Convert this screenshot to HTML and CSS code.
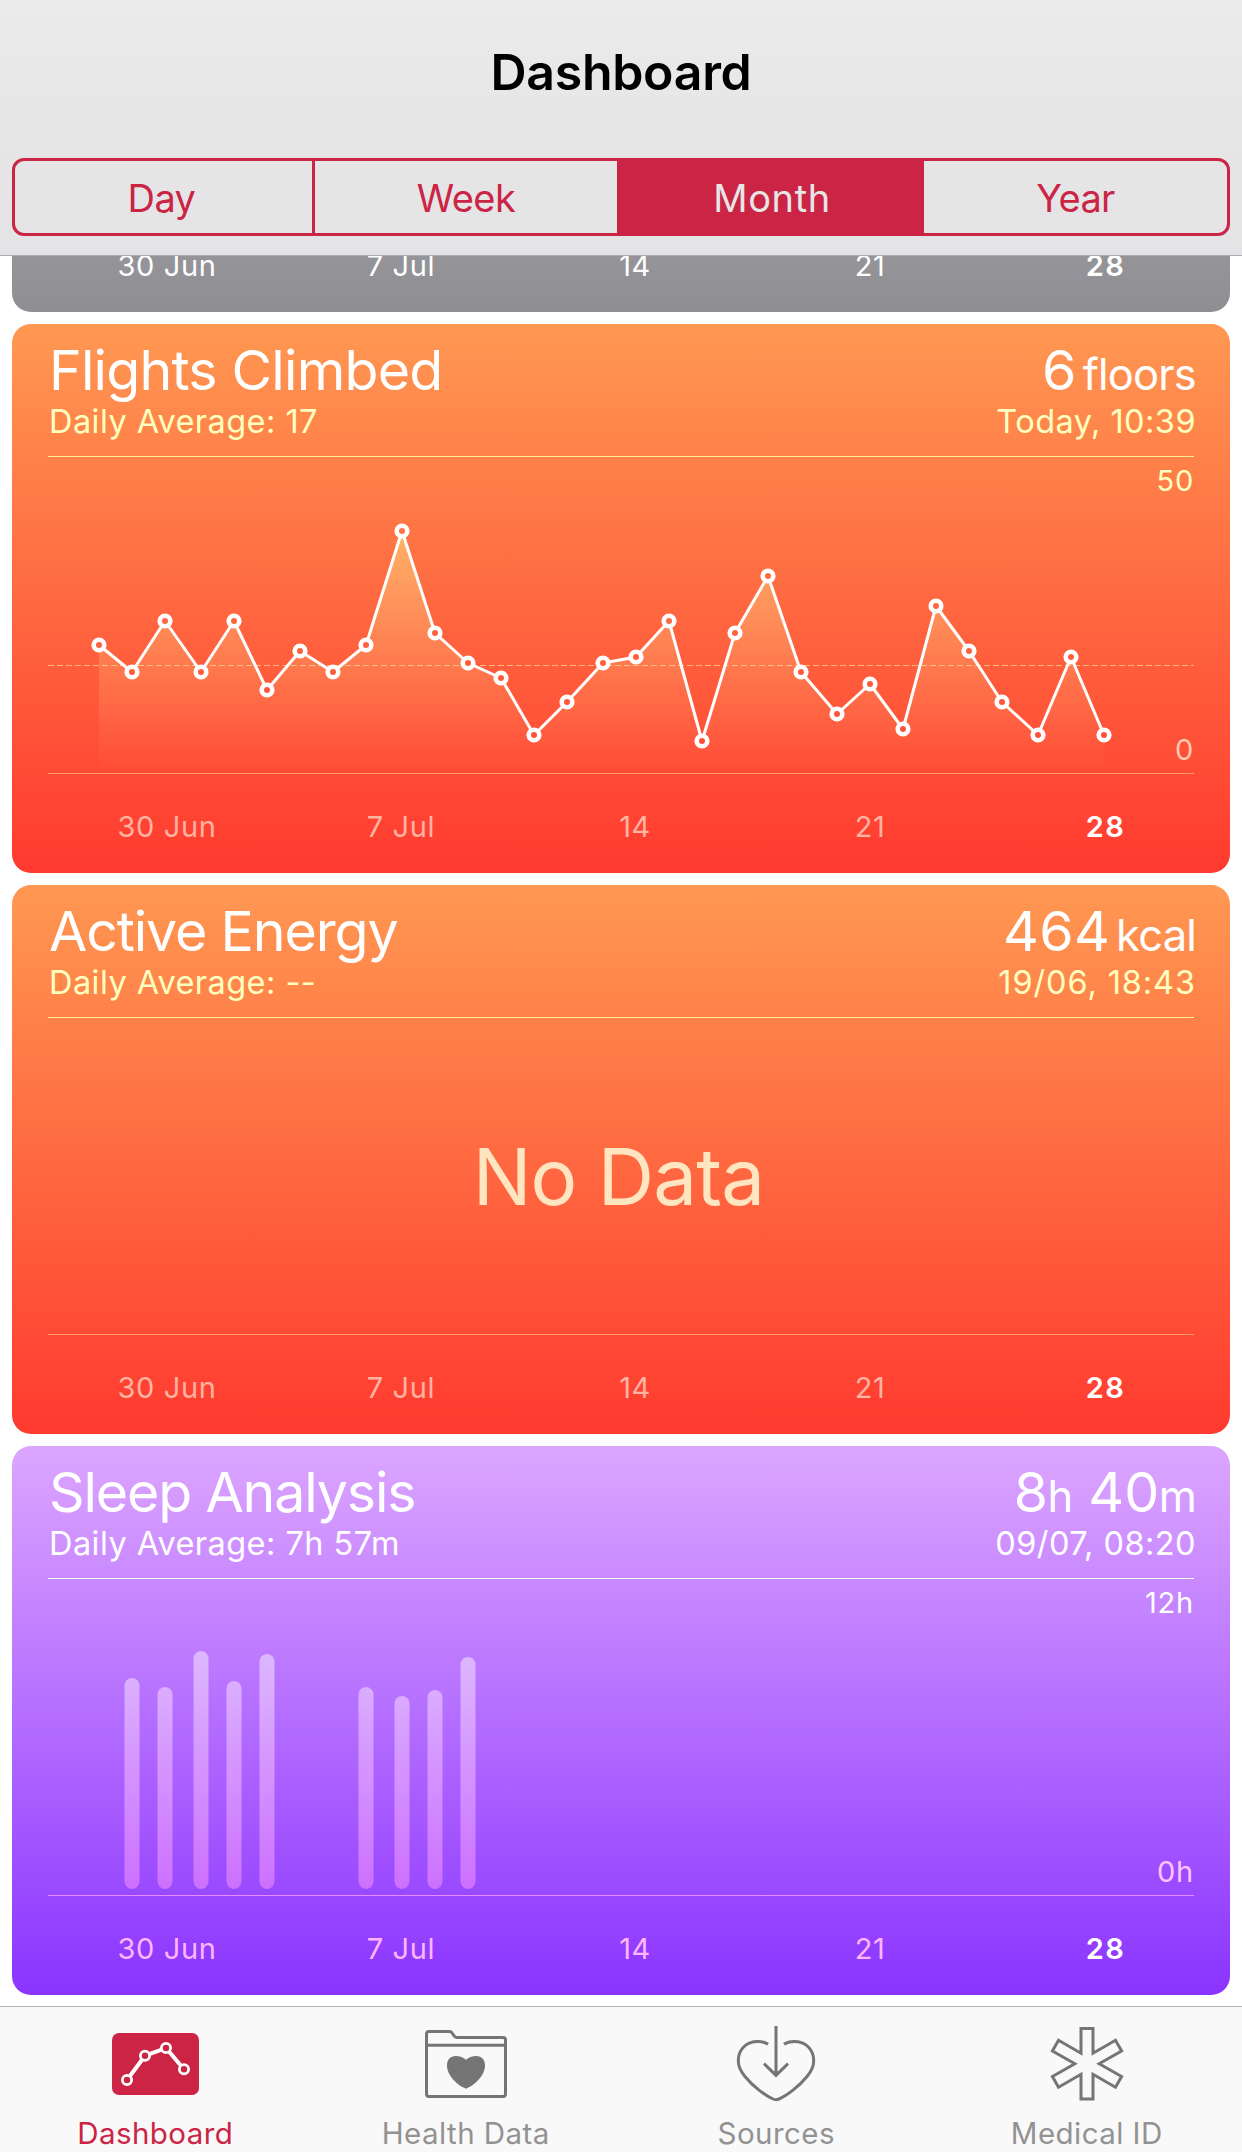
FILE: index.html
```
<!DOCTYPE html>
<html lang="en">
<head>
    <meta charset="UTF-8">
    <meta name="viewport" content="width=device-width, initial-scale=1.0">
    <title>Dashboard</title>
    <link rel="stylesheet" href="styles.css">
</head>
<body>
    <!-- Header -->
    <header class="header">
        <h1>Dashboard</h1>
        <div class="segments">
            <button class="segment">Day</button>
            <button class="segment">Week</button>
            <button class="segment active">Month</button>
            <button class="segment">Year</button>
        </div>
    </header>

    <!-- Cards, scrolled down to the last one -->
    <main class="cards">
        <section class="card grey">
            <div class="dates">
                <span>30 Jun</span><span>7 Jul</span><span>14</span><span>21</span><span class="today">28</span>
            </div>
        </section>

        <section class="card orange flights">
            <div class="card-head">
                <div>
                    <h2>Flights Climbed</h2>
                    <p>Daily Average: 17</p>
                </div>
                <div class="latest">
                    <div class="value">6<span class="unit">floors</span></div>
                    <p>Today, 10:39</p>
                </div>
            </div>
            <div class="chart">
                <svg id="flightsChart" width="1146" height="316" viewBox="0 0 1146 316">
                    <defs>
                        <linearGradient id="areaFill" gradientUnits="userSpaceOnUse" x1="0" y1="74" x2="0" y2="316">
                            <stop offset="0" stop-color="#fff08a" stop-opacity="0.5"/>
                            <stop offset="1" stop-color="#ffc890" stop-opacity="0"/>
                        </linearGradient>
                        <linearGradient id="dotFill" gradientUnits="userSpaceOnUse" x1="0" y1="-133" x2="0" y2="416">
                            <stop offset="0" stop-color="#ff9852"/>
                            <stop offset="1" stop-color="#ff3a2f"/>
                        </linearGradient>
                    </defs>
                    <polygon id="area" fill="url(#areaFill)"/>
                    <line class="average" x1="0" y1="208.5" x2="1146" y2="208.5"/>
                    <polyline id="line" class="line"/>
                    <g id="dots" class="dots"></g>
                    <text class="axis" x="1146" y="34">50</text>
                    <text class="axis low" x="1146" y="303">0</text>
                </svg>
            </div>
            <div class="dates">
                <span>30 Jun</span><span>7 Jul</span><span>14</span><span>21</span><span class="today">28</span>
            </div>
        </section>

        <section class="card orange energy">
            <div class="card-head">
                <div>
                    <h2>Active Energy</h2>
                    <p>Daily Average: --</p>
                </div>
                <div class="latest">
                    <div class="value">464<span class="unit">kcal</span></div>
                    <p>19/06, 18:43</p>
                </div>
            </div>
            <div class="chart">
                <div class="no-data">No Data</div>
            </div>
            <div class="dates">
                <span>30 Jun</span><span>7 Jul</span><span>14</span><span>21</span><span class="today">28</span>
            </div>
        </section>

        <section class="card purple sleep">
            <div class="card-head">
                <div>
                    <h2>Sleep Analysis</h2>
                    <p>Daily Average: 7h 57m</p>
                </div>
                <div class="latest">
                    <div class="value">8<span class="unit">h</span> 40<span class="unit">m</span></div>
                    <p>09/07, 08:20</p>
                </div>
            </div>
            <div class="chart">
                <svg width="1146" height="316" viewBox="0 0 1146 316">
                    <defs>
                        <linearGradient id="barFill" gradientUnits="userSpaceOnUse" x1="0" y1="72" x2="0" y2="310">
                            <stop offset="0" stop-color="#ddb8ff"/>
                            <stop offset="1" stop-color="#cc70ff"/>
                        </linearGradient>
                    </defs>
                    <g fill="url(#barFill)">
                        <rect x="76.5" y="99" width="15" height="211" rx="7.5"/>
                        <rect x="109.5" y="108" width="15" height="202" rx="7.5"/>
                        <rect x="145.5" y="72" width="15" height="238" rx="7.5"/>
                        <rect x="178.5" y="102" width="15" height="208" rx="7.5"/>
                        <rect x="211.5" y="75" width="15" height="235" rx="7.5"/>
                        <rect x="310.5" y="108" width="15" height="202" rx="7.5"/>
                        <rect x="346.5" y="117" width="15" height="193" rx="7.5"/>
                        <rect x="379.5" y="111" width="15" height="199" rx="7.5"/>
                        <rect x="412.5" y="78" width="15" height="232" rx="7.5"/>
                    </g>
                    <text class="axis" x="1146" y="34">12h</text>
                    <text class="axis low" x="1146" y="303">0h</text>
                </svg>
            </div>
            <div class="dates">
                <span>30 Jun</span><span>7 Jul</span><span>14</span><span>21</span><span class="today">28</span>
            </div>
        </section>
    </main>

    <!-- Tab bar -->
    <nav class="tabs">
        <a class="tab active">
            <svg width="90" height="80" viewBox="0 0 90 80">
                <rect x="2" y="9" width="87" height="62" rx="7" fill="#cb2444"/>
                <g fill="#cb2444" stroke="#fff">
                    <polyline points="17,56 35,31.7 56,24 74,45.3" fill="none" stroke-width="4"/>
                    <g stroke-width="2.8">
                        <circle cx="17" cy="56" r="4.6"/>
                        <circle cx="35" cy="31.7" r="4.6"/>
                        <circle cx="56" cy="24" r="4.6"/>
                        <circle cx="74" cy="45.3" r="4.6"/>
                    </g>
                </g>
            </svg>
            <span>Dashboard</span>
        </a>
        <a class="tab">
            <svg width="90" height="80" viewBox="0.5 0 90 80">
                <path class="stroke" d="M8.5 72.5H82.5Q85 72.5 85 70V16Q85 13.5 82.5 13.5H36.5Q34.5 13.5 33.5 11.8L31.8 9.2Q30.8 7.5 28.8 7.5H8.5Q6 7.5 6 10V70Q6 72.5 8.5 72.5ZM6 21.3H85"/>
                <path fill="#757575" d="M45.5 64.7C38 62 26.5 52 26.5 41.5C26.5 35.5 30 32 35 32C39.5 32 43 33.5 45.5 35.7C48 33.5 51.5 32 56 32C61 32 64.5 35.5 64.5 41.5C64.5 52 53 62 45.5 64.7Z"/>
            </svg>
            <span>Health Data</span>
        </a>
        <a class="tab">
            <svg width="90" height="80" viewBox="0 0 90 80">
                <path class="stroke" d="M45 2V51M33 39.7L45 51.3L57 39.7"/>
                <path class="stroke" d="M37 20.3C34 18.2 30.5 17.5 27 17.5C15 17.5 7.3 25.5 7.3 37C7.3 43 9 46.5 14 52.5C22 62.5 34 71.5 42 75Q45 76.3 48 75C56 71.5 68 62.5 76 52.5C81 46.5 82.7 43 82.7 37C82.7 25.5 75 17.5 63 17.5C59.5 17.5 56 18.2 53 20.3"/>
            </svg>
            <span>Sources</span>
        </a>
        <a class="tab">
            <svg width="90" height="80" viewBox="0 0 90 80">
                <path class="stroke" d="M39 4.5H51V29.2L73.5 16.3L79.6 27L57.2 39.75L79.6 52.5L73.5 63.2L51 50.3V75H39V50.3L16.5 63.2L10.4 52.5L32.8 39.75L10.4 27L16.5 16.3L39 29.2Z"/>
            </svg>
            <span>Medical ID</span>
        </a>
    </nav>

    <script>
        // x and y of each day, in chart pixels
        const days = [
            [51, 188], [84, 215], [117, 164], [153, 215], [186, 164], [219, 233], [252, 194], [285, 215],
            [318, 188], [354, 74], [387, 176], [420, 206], [453, 221], [486, 278], [519, 245], [555, 206],
            [588, 200], [621, 164], [654, 284], [687, 176], [720, 119], [753, 215], [789, 257], [822, 227],
            [855, 272], [888, 149], [921, 194], [954, 245], [990, 278], [1023, 200], [1056, 278]
        ];
        const points = days.map(d => d.join(',')).join(' ');

        document.getElementById('line').setAttribute('points', points);
        document.getElementById('area').setAttribute('points', `51,316 ${points} 1056,316`);
        document.getElementById('dots').innerHTML = days
            .map(([x, y]) => `<circle cx="${x}" cy="${y}" r="5.3"/>`)
            .join('');
    </script>
</body>
</html>
```
FILE: styles.css
```
* {
    box-sizing: border-box;
}
body {
    margin: 0;
    width: 1242px;
    height: 2152px;
    display: flex;
    flex-direction: column;
    background: #fff;
    font-family: Inter, "Liberation Sans", sans-serif;
    overflow: hidden;
}
h1, h2, p {
    margin: 0;
    font-weight: 400;
}

/* Header */
.header {
    height: 256px;
    padding: 0 12px;
    background: linear-gradient(#ebebec, #e6e6e7 50%, #e4e4e6);
    border-bottom: 1px solid #aeaeb0;
}
.header h1 {
    margin-bottom: 14px;
    line-height: 144px;
    text-align: center;
    font-size: 50px;
    font-weight: 600;
    letter-spacing: -0.3px;
    color: #000;
}
.segments {
    display: grid;
    grid-template-columns: 300px 305px 304px 1fr;
    height: 78px;
    border: 3px solid #cb2444;
    border-radius: 12px;
    overflow: hidden;
}
.segment {
    padding: 2px 0 0;
    border: none;
    border-right: 3px solid #cb2444;
    background: none;
    font-family: inherit;
    font-size: 38px;
    letter-spacing: -0.6px;
    color: #cb2444;
}
.segment:first-child {
    padding-right: 4px;
}
.segment:last-child {
    border-right: none;
}
.segment.active {
    padding-left: 3px;
    background: #cb2444;
    letter-spacing: 0.6px;
    color: #e6e6e7;
}

/* Cards */
.cards {
    flex: 1;
    min-height: 0;
    display: flex;
    flex-direction: column;
    justify-content: flex-end;
    gap: 12px;
    padding: 0 12px 11px;
    overflow: hidden;
}
.card {
    flex: none;
    height: 549px;
    display: flex;
    flex-direction: column;
    border-radius: 19px;
    color: #fff;
}
.card.grey {
    justify-content: flex-end;
    background: linear-gradient(#c7c7cc, #8e8e93);
}
.card.orange {
    --accent: #ffffc0;
    --rule: #ffee90;
    --rule-low: rgba(255, 240, 160, 0.5);
    --label: #ffb3a2;
    --axis-low: #ffc9ae;
    background: linear-gradient(#ff9852, #ff3a2f);
}
.card.purple {
    --accent: #fff;
    --rule: #fff;
    --rule-low: #e68cff;
    --label: #ffb5fb;
    --axis-low: #ffc4ff;
    background: linear-gradient(#dca6ff, #c98aff 24%, #8a34ff);
}
.card-head {
    display: flex;
    justify-content: space-between;
    height: 133px;
    margin: 0 36px;
    padding-top: 10px;
    border-bottom: 1px solid var(--rule);
}
.card-head h2, .value {
    font-size: 55.5px;
    line-height: 72px;
    white-space: pre;
}
.card-head h2 {
    padding-left: 1px;
}
.card-head p {
    padding-left: 1px;
    font-size: 32.5px;
    line-height: 32px;
    letter-spacing: 0.45px;
    color: var(--accent);
}
.flights h2 {
    letter-spacing: -0.8px;
}
.energy h2 {
    letter-spacing: -1.15px;
}
.sleep h2 {
    letter-spacing: -1.15px;
}
.energy .latest p {
    letter-spacing: 0.9px;
}
.latest {
    margin-right: -2px;
    text-align: right;
}
.value {
    letter-spacing: 0.3px;
}
.unit {
    margin-left: 6px;
    font-size: 43.5px;
    line-height: 1;
    letter-spacing: -0.8px;
}
.sleep .unit {
    margin-left: -1px;
}

/* Charts */
.chart {
    display: flex;
    align-items: center;
    justify-content: center;
    height: 317px;
    margin: 0 36px;
    border-bottom: 1px solid var(--rule-low);
}
.chart svg {
    display: block;
    overflow: visible;
}
.average {
    stroke: rgba(255, 245, 170, 0.6);
    stroke-width: 1;
    stroke-dasharray: 6 3;
}
.line {
    fill: none;
    stroke: #fff;
    stroke-width: 3;
    stroke-linejoin: round;
}
.dots {
    fill: url(#dotFill);
    stroke: #fff;
    stroke-width: 4.6;
}
.axis {
    font-size: 29px;
    letter-spacing: 0.8px;
    text-anchor: end;
    fill: var(--accent);
}
.axis.low {
    fill: var(--axis-low);
}
.no-data {
    padding-right: 5px;
    font-size: 78px;
    letter-spacing: -0.8px;
    color: #ffe5c0;
}
.dates {
    display: grid;
    grid-template-columns: 234px 234px 234px 236px 235px;
    height: 99px;
    padding: 23px 0 0 38px;
    font-size: 29px;
    line-height: 60px;
    letter-spacing: 0.6px;
    text-align: center;
    color: var(--label, #fff);
}
.today {
    font-weight: 600;
    letter-spacing: 1.4px;
    color: #fff;
}

/* Tab bar */
.tabs {
    display: grid;
    grid-template-columns: repeat(4, 1fr);
    height: 146px;
    padding-top: 17px;
    border-top: 1px solid #b0b0b0;
    background: #f9f9f9;
}
.tab {
    display: flex;
    flex-direction: column;
    align-items: center;
    font-size: 29.5px;
    line-height: 58px;
    letter-spacing: 0.45px;
    color: #929292;
}
.tab.active {
    color: #cb2444;
}
.stroke {
    fill: none;
    stroke: #757575;
    stroke-width: 3;
}
```
